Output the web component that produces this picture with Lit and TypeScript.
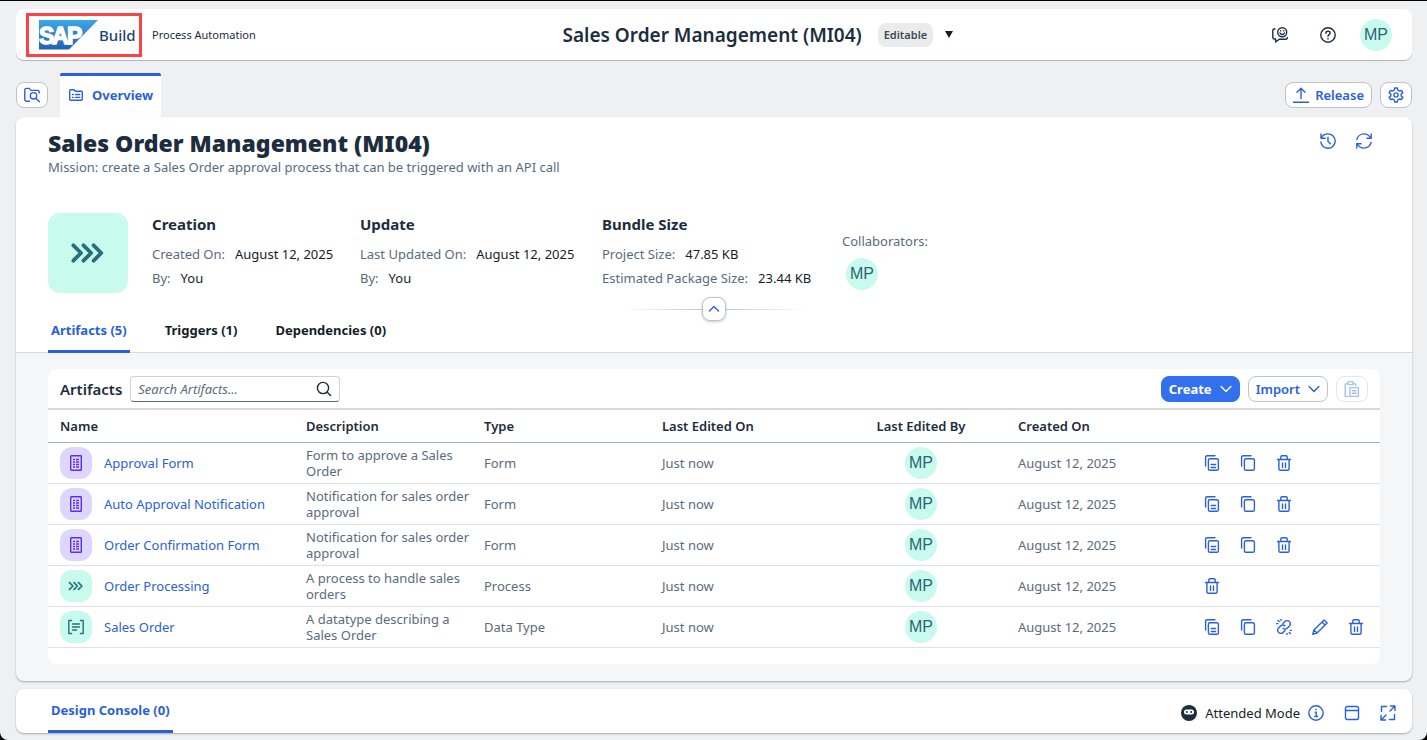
import { LitElement, html, css, svg, TemplateResult } from "lit";
import { customElement, property, state } from "lit/decorators.js";
import { classMap } from "lit/directives/class-map.js";

const glyphs: Record<string, TemplateResult> = {
  folderSearch: svg`<path d="M5.500 14.200H2.400C1.600 14.200 .8 13.600 .8 12.800V2.800C.8 2 1.600 1.400 2.400 1.400H5.200L7 3.400H13.600C14.400 3.400 15.200 4 15.200 4.800V6"/><circle cx="9.500" cy="8.800" r="3.200"/><path d="M11.900 11.200L15.400 14.800"/>`,
  listFolder: svg`<path d="M1.700 12.300V3.700C1.700 3.100 2.100 2.700 2.700 2.700H6L7.500 4.300H13.300C13.900 4.300 14.300 4.700 14.300 5.300V12.300C14.300 12.900 13.900 13.300 13.300 13.300H2.700C2.100 13.300 1.700 12.900 1.700 12.300Z"/><path d="M4.400 7.500H5.200M7.500 7.500H11.800M4.400 10.400H5.200M7.500 10.400H11.800"/>`,
  release: svg`<path d="M8 11.500V1.500M4 5.300L8 1.300L12 5.300M.2 15.200H15.800"/>`,
  gear: svg`<path d="M6.700 1H9.300L9.800 3.100L11.400 4L13.500 3.400L14.800 5.700L13.200 7.100V8.900L14.800 10.300L13.500 12.600L11.400 12L9.800 12.900L9.300 15H6.700L6.200 12.900L4.600 12L2.500 12.600L1.200 10.300L2.800 8.900V7.100L1.200 5.700L2.500 3.400L4.600 4L6.200 3.100Z"/><circle cx="8" cy="8" r="2.100"/>`,
  feedback: svg`<path d="M3 2H2.400C1.400 2 .8 2.700 .8 3.600V10.400C.8 11.400 1.400 12 2.400 12H3.600V15L7.300 12.200H13.500C14.600 12.200 15.400 11.600 15.400 10.600"/><circle cx="10.200" cy="5.200" r="4.500"/><path d="M8 6C8.500 7 9.200 7.500 10.200 7.500S11.900 7 12.400 6M8.700 3.700V3.900M11.700 3.700V3.900"/>`,
  help: svg`<circle cx="8" cy="8" r="7.200"/><path d="M5.900 6.300C5.900 5.100 6.800 4.300 8 4.300S10.100 5.100 10.100 6.200C10.100 7.500 8 7.700 8 9.200M8 11.500V12"/>`,
  history: svg`<path d="M1 1V5.200H5.200M1.300 5C2.500 2.500 5 .9 7.900 .9C11.900 .9 15.200 4.100 15.200 8.100S11.900 15.200 7.900 15.200C4.300 15.200 1.300 12.500 .8 9M8 4.300V8.500L10.500 10.800"/>`,
  refresh: svg`<path d="M15.200 1V5.200H11M14.800 5.200C13.500 2.700 11 .9 8 .9C4.500 .9 1.600 3.400 .9 6.500M.8 15V10.800H5M1.200 10.800C2.500 13.300 5 15.100 8 15.100C11.500 15.100 14.400 12.600 15.100 9.500"/>`,
  search: svg`<circle cx="7" cy="7" r="5.600"/><path d="M11 11L14.600 14.600"/>`,
  down: svg`<path d="M1.500 4.800L8 11.200L14.500 4.800" stroke-width="1.900"/>`,
  up: svg`<path d="M3.500 10L8 5.500L12.500 10"/>`,
  paste: svg`<path d="M3.600 2.600H2.700C1.800 2.600 1.200 3.200 1.200 4.100V13.900C1.200 14.800 1.800 15.400 2.700 15.400H4M9.500 2.600H10.400C11.300 2.600 11.900 3.200 11.900 4.100V4.500M4 1.600C4 1 4.400 .6 5 .6H8.100C8.700 .6 9.100 1 9.100 1.600V3.600H4Z"/><rect x="6" y="6.600" width="8.400" height="8.800"/><path d="M8.300 9.700H12.200M8.300 12.300H12.200"/>`,
  duplicate: svg`<path d="M1.600 11V2.300C1.600 1.300 2.300 .7 3.200 .7H11"/><rect x="4.400" y="3.700" width="10" height="11.600" rx="1.600"/><path d="M7.200 9.500H11.600M7.200 12.500H11.600"/>`,
  copy: svg`<path d="M1.600 11V2.300C1.600 1.300 2.300 .7 3.200 .7H11"/><rect x="4.400" y="3.700" width="10" height="11.600" rx="1.600"/>`,
  trash: svg`<path d="M1.500 4.500H14.500M4.800 4V2C4.800 1.200 5.300 .7 6 .7H10C10.700 .7 11.200 1.200 11.200 2V4M2.900 4.300V13.900C2.900 14.800 3.500 15.300 4.300 15.300H11.700C12.500 15.300 13.100 14.800 13.100 13.900V4.300M6.500 8V12.500M9.500 8V12.500"/>`,
  unlink: svg`<path d="M7 4.500L8.900 2.600C10.200 1.300 12.200 1.300 13.400 2.600S14.600 5.700 13.400 7L11.200 9.200C10 10.400 8.200 10.300 7.200 9.300M9 11.500L7.100 13.400C5.800 14.700 3.800 14.700 2.600 13.400S1.400 10.300 2.600 9L4.800 6.800C6 5.600 7.800 5.700 8.800 6.700M.6 4.600H1.800M2 1.400L3.100 2.500M5 .6V1.600M14.200 11.400H15.400M13.300 13.500L14.400 14.600M11 14.400V15.400"/>`,
  edit: svg`<path d="M.8 15.200L1.900 11L12.100 .9L15.100 3.900L5 14.100ZM10 3L13 6M2 11.100L4.900 14"/>`,
  info: svg`<circle cx="8" cy="8" r="7.200"/><path stroke-linecap="butt" d="M6.600 7.200H8.200V11.600M6.300 11.500H10M8 3.800V5.300"/>`,
  panel: svg`<rect x="1.500" y="1.500" width="13" height="13" rx="1.800"/><path d="M1.500 5.500H14.500"/>`,
  expand: svg`<path d="M10.500 1H15V5.500M15 1L10 6M5.500 15H1V10.500M1 15L6 10M6.500 1.500H1.500V6.500M9.500 14.500H14.500V9.500"/>`,
  form: svg`<rect x="2.700" y=".7" width="10.600" height="14.600" rx=".6"/><path stroke-linecap="butt" stroke-width="1.300" d="M5 4.500H7M8 4.500H11M5 7H7M8 7H11M5 9.500H7M8 9.500H11M5 12H7M8 12H11"/>`,
  process: svg`<path stroke-width="1.700" d="M1.500 4.600L4.900 8L1.500 11.400M6 4.600L9.400 8L6 11.400M10.500 4.600L13.900 8L10.500 11.400"/>`,
  datatype: svg`<path d="M3.600 1.500H.8V14.500H3.600M12.400 1.500H15.200V14.500H12.400M4.500 5H11.500M4.500 8H11.500M4.500 11H8.500"/>`,
};

@customElement("ui-icon")
export class UiIcon extends LitElement {
  @property() name = "";
  static styles = css`
    :host { display: inline-flex; width: 16px; height: 16px; flex: none; }
    svg { width: 100%; height: 100%; fill: none; stroke: currentColor; stroke-width: 1.4; stroke-linecap: round; stroke-linejoin: round; }
  `;
  render() {
    return html`<svg viewBox="0 0 16 16" aria-hidden="true">${glyphs[this.name]}</svg>`;
  }
}

interface Artifact {
  name: string;
  description: string;
  type: string;
  icon: string;
  actions: string[];
}

const full = ["duplicate", "copy", "trash"];
const artifacts: Artifact[] = [
  { name: "Approval Form", description: "Form to approve a Sales Order", type: "Form", icon: "form", actions: full },
  { name: "Auto Approval Notification", description: "Notification for sales order approval", type: "Form", icon: "form", actions: full },
  { name: "Order Confirmation Form", description: "Notification for sales order approval", type: "Form", icon: "form", actions: full },
  { name: "Order Processing", description: "A process to handle sales orders", type: "Process", icon: "process", actions: ["trash"] },
  { name: "Sales Order", description: "A datatype describing a Sales Order", type: "Data Type", icon: "datatype", actions: ["duplicate", "copy", "unlink", "edit", "trash"] },
];
const tabs = ["Artifacts (5)", "Triggers (1)", "Dependencies (0)"];

@customElement("app-root")
export class AppRoot extends LitElement {
  @state() private tab = 0;

  static styles = css`
    :host {
      display: block;
      background: #000;
      font-family: "Noto Sans", "Open Sans", sans-serif;
      font-size: 13px;
      line-height: 16px;
      color: #1d2d3e;
    }
    *, *::before { box-sizing: border-box; }
    h1, h2, h3, p, dl, dd, dt { margin: 0; }
    button, input { font: inherit; color: inherit; }
    button { margin: 0; padding: 0; border: 0; background: none; cursor: pointer; display: inline-flex; align-items: center; justify-content: center; }
    a { color: #2a61d8; text-decoration: none; }
    .page { min-height: 100vh; border-top: 1px solid #000; background: #eff0f2; border-radius: 0 0 8px 8px; padding: 8px 15px 7px 16px; display: flex; flex-direction: column; }
    .card { background: #fff; border-radius: 8px; box-shadow: 0 1px 2px #0000004d; }

    .shell { display: flex; align-items: center; justify-content: space-between; height: 51px; padding: 0 20px 0 10px; box-shadow: 0 1px 0 #b4b6b9; }
    .brand { display: flex; align-items: center; gap: 10px; }
    .mark { display: flex; align-items: center; gap: 1px; height: 44px; width: 116px; border: 3px solid #fb4245; padding-left: 10px; font-size: 15px; font-weight: 500; color: #1b4279; }
    .mark svg { width: 59px; height: 30px; flex: none; }
    .product { font-size: 11px; }
    .project { display: flex; align-items: center; gap: 8px; }
    .project h1 { font-size: 19px; font-weight: 600; line-height: 24px; padding-right: 8px; }
    .badge { background: #eaebed; border-radius: 8px; padding: 4px 6px; font-size: 11px; font-weight: 600; color: #434a52; }
    .caret { width: 16px; height: 24px; }
    .caret::before { content: ""; border: 4px solid transparent; border-top: 7px solid #131e29; border-bottom: 0; }
    .tools { display: flex; align-items: center; gap: 16px; }
    .tools button { width: 32px; height: 32px; }
    .avatar { display: inline-flex; align-items: center; justify-content: center; width: 32px; height: 32px; border-radius: 50%; background: #c8faee; color: #2d6674; font: 16px/32px "Liberation Sans", sans-serif; }

    .bar { display: flex; align-items: center; gap: 8px; height: 44px; margin-top: 13px; }
    .bar .open { display: flex; align-items: center; align-self: stretch; gap: 8px; margin: 0 auto 0 4px; padding: 0 8px 3px; background: #fff; border-top: 3px solid #2a61d8; border-radius: 2px 2px 0 0; font-weight: 700; color: #2a61d8; }
    .btn { height: 26px; padding: 0 7px; gap: 6px; border: 1px solid #bcc3ca; border-radius: 8px; background: #fff; color: #2a61d8; font-weight: 600; }
    .btn.emph { background: #3370ee; border-color: #3370ee; color: #fff; font-weight: 700; }
    .btn.menu { gap: 8px; }
    .menu ui-icon { width: 12px; height: 12px; }
    .btn:disabled { opacity: .4; }

    .panel { display: flex; flex-direction: column; background: #f5f6f7; flex: 1; }
    .head { background: #fff; border-bottom: 1px solid #d9d9d9; border-radius: 8px 8px 0 0; padding: 12px 32px 0; }
    .title { display: flex; justify-content: space-between; }
    .title h2 { font-size: 23px; line-height: 28px; font-weight: 900; }
    .muted, .title p { color: #5b6b7d; }
    .title p { line-height: 20px; }
    .title .tools { gap: 4px; height: 24px; color: #2a61d8; }
    .info { display: grid; grid-template-columns: 80px 184px 218px 216px auto; align-items: start; gap: 24px; margin-top: 36px; }
    .tile { width: 80px; height: 80px; border-radius: 12px; background: #c8faee; color: #266f7b; display: flex; align-items: center; justify-content: center; }
    .tile ui-icon { width: 36px; height: 36px; }
    .facts h3 { font-size: 15px; line-height: 22px; margin-bottom: 7px; font-weight: 700; }
    .facts dl > div { display: flex; gap: 10px; line-height: 24px; white-space: nowrap; }
    .facts dt { color: #5b6b7d; }
    .facts dd { color: #131e29; }
    .people { padding-top: 20px; }
    .people .avatar { margin: 9px 0 0 4px; display: flex; }
    .fold { display: flex; align-items: center; justify-content: center; margin-top: 4px; }
    .fold::before, .fold::after { content: ""; width: 80px; height: 1px; background: linear-gradient(90deg, #fff, #c4c6c8); }
    .fold::after { background: linear-gradient(270deg, #fff, #c4c6c8); }
    .fold button { width: 24px; height: 24px; border: 1px solid #bcc3ca; border-radius: 8px; box-shadow: 0 1px 3px #00000033; color: #2a61d8; background: #fff; }
    .tabs { display: flex; gap: 32px; margin-bottom: -1px; }
    .tab { padding: 0 3px 11px; border-bottom: 3px solid transparent; line-height: 18px; font-weight: 700; color: #131e29; border-radius: 2px 2px 0 0; }
    .tab.on { color: #2a61d8; border-color: #2a61d8; }

    .list { margin: 16px 32px; padding-bottom: 16px; background: #fff; border-radius: 8px; }
    .toolbar { display: flex; align-items: center; gap: 8px; height: 39px; padding: 0 12px; }
    .toolbar h3 { font-size: 15px; line-height: 20px; font-weight: 600; }
    .search { display: flex; align-items: center; width: 210px; height: 26px; margin-right: auto; padding: 0 7px; border: 1px solid #d0d4d8; border-bottom-color: #556b81; border-radius: 4px; }
    .search input { flex: 1; min-width: 0; border: 0; outline: 0; padding: 0; background: none; }
    .search input::placeholder { font-style: italic; color: #5b6b7d; opacity: 1; }
    table { width: 100%; table-layout: fixed; border-collapse: separate; border-spacing: 0; border-top: 2px solid #d9d9d9; }
    th { height: 33px; padding: 0 0 0 8px; text-align: left; font-weight: 600; border-bottom: 1px solid #a8b2bd; }
    td { height: 41px; padding: 0 0 0 8px; color: #5b6b7d; border-bottom: 1px solid #e0e1e3; }
    th:first-child, td:first-child { width: 250px; padding-left: 12px; }
    th.who, td.who { padding: 0; text-align: center; }
    th.acts { width: 192px; }
    .who .avatar { vertical-align: middle; }
    .item { display: flex; align-items: center; gap: 12px; }
    .kind { display: flex; align-items: center; justify-content: center; width: 32px; height: 32px; border-radius: 12px; background: #c8faee; color: #266f7b; }
    .kind.form { background: #dfd6ff; color: #5a2ff0; }
    .row-acts { display: flex; gap: 4px; color: #2a61d8; }
    .row-acts button { width: 32px; height: 32px; }

    .console { display: flex; align-items: flex-start; justify-content: space-between; height: 44px; margin-top: 8px; padding: 0 16px 0 32px; }
    .console .tab { padding: 12px 3px 11px; }
    .status { display: flex; align-items: center; gap: 8px; height: 48px; color: #131e29; }
    .status .btns { display: flex; gap: 20px; color: #2a61d8; }
    .bot { width: 16px; height: 16px; }
  `;

  private person() {
    return html`<span class="avatar">MP</span>`;
  }

  private iconButton(name: string) {
    return html`<button type="button" aria-label=${name}><ui-icon name=${name}></ui-icon></button>`;
  }

  private fact(title: string, rows: [string, string][]) {
    return html`<section class="facts"><h3>${title}</h3>
      <dl>${rows.map(([k, v]) => html`<div><dt>${k}</dt><dd>${v}</dd></div>`)}</dl></section>`;
  }

  render() {
    return html`<div class="page">
      <header class="shell card">
        <div class="brand">
          <div class="mark">
            <svg viewBox="0 0 59 30" role="img" aria-label="SAP">
              <defs><linearGradient id="g" x2="0" y2="1"><stop stop-color="#3ba7ea" /><stop offset="1" stop-color="#2360b4" /></linearGradient></defs>
              <path d="M0 0H59L30 29.500H0Z" fill="url(#g)" />
              <text y="23.500" font-family="Liberation Sans, sans-serif" font-size="23" font-weight="700" fill="#fff" stroke="#fff" stroke-width="1.400"><tspan x="0">S</tspan><tspan x="13">A</tspan><tspan x="28">P</tspan></text>
            </svg>
            <span>Build</span>
          </div>
          <span class="product">Process Automation</span>
        </div>
        <div class="project">
          <h1>Sales Order Management (MI04)</h1>
          <span class="badge">Editable</span>
          <button class="caret" type="button" aria-label="Versions"></button>
        </div>
        <div class="tools">
          ${this.iconButton("feedback")} ${this.iconButton("help")}
          <span class="avatar">MP</span>
        </div>
      </header>

      <nav class="bar">
        <button class="btn" type="button" aria-label="Browse project"><ui-icon name="folderSearch"></ui-icon></button>
        <a class="open" href="#overview"><ui-icon name="listFolder"></ui-icon>Overview</a>
        <button class="btn" type="button"><ui-icon name="release"></ui-icon>Release</button>
        <button class="btn" type="button" aria-label="Settings"><ui-icon name="gear"></ui-icon></button>
      </nav>

      <main class="panel card">
        <div class="head">
          <div class="title">
            <div>
              <h2>Sales Order Management (MI04)</h2>
              <p>Mission: create a Sales Order approval process that can be triggered with an API call</p>
            </div>
            <div class="tools">${this.iconButton("history")} ${this.iconButton("refresh")}</div>
          </div>
          <div class="info">
            <div class="tile"><ui-icon name="process"></ui-icon></div>
            ${this.fact("Creation", [["Created On:", "August 12, 2025"], ["By:", "You"]])}
            ${this.fact("Update", [["Last Updated On:", "August 12, 2025"], ["By:", "You"]])}
            ${this.fact("Bundle Size", [["Project Size:", "47.85 KB"], ["Estimated Package Size:", "23.44 KB"]])}
            <div class="people muted">Collaborators:${this.person()}</div>
          </div>
          <div class="fold"><button type="button" aria-label="Collapse header"><ui-icon name="up"></ui-icon></button></div>
          <div class="tabs" role="tablist">
            ${tabs.map((t, i) => html`<button type="button" role="tab" aria-selected=${i === this.tab}
              class=${classMap({ tab: true, on: i === this.tab })} @click=${() => (this.tab = i)}>${t}</button>`)}
          </div>
        </div>

        <section class="list">
          <div class="toolbar">
            <h3>Artifacts</h3>
            <label class="search"><input type="text" aria-label="Search artifacts" placeholder="Search Artifacts..." /><ui-icon name="search"></ui-icon></label>
            <button class="btn menu emph" type="button">Create<ui-icon name="down"></ui-icon></button>
            <button class="btn menu" type="button">Import<ui-icon name="down"></ui-icon></button>
            <button class="btn" type="button" aria-label="Paste" disabled><ui-icon name="paste"></ui-icon></button>
          </div>
          <table>
            <thead><tr><th>Name</th><th>Description</th><th>Type</th><th>Last Edited On</th><th class="who">Last Edited By</th><th>Created On</th><th class="acts"></th></tr></thead>
            <tbody>
              ${artifacts.map((a) => html`<tr>
                <td><div class="item"><span class=${classMap({ kind: true, form: a.icon === "form" })}><ui-icon name=${a.icon}></ui-icon></span><a href="#artifact">${a.name}</a></div></td>
                <td>${a.description}</td>
                <td>${a.type}</td>
                <td>Just now</td>
                <td class="who">${this.person()}</td>
                <td>August 12, 2025</td>
                <td><div class="row-acts">${a.actions.map((n) => this.iconButton(n))}</div></td>
              </tr>`)}
            </tbody>
          </table>
        </section>
      </main>

      <footer class="console card">
        <button type="button" class="tab on">Design Console (0)</button>
        <div class="status">
          <svg class="bot" viewBox="0 0 16 16" aria-hidden="true">
            <circle cx="8" cy="8" r="8" fill="#1d2d3e" />
            <rect x="3" y="4.500" width="10" height="5" rx="2.500" fill="#fff" />
            <circle cx="5.800" cy="7" r="1" fill="#1d2d3e" /><circle cx="10.200" cy="7" r="1" fill="#1d2d3e" />
          </svg>
          <span>Attended Mode</span>
          <div class="btns">${this.iconButton("info")} ${this.iconButton("panel")} ${this.iconButton("expand")}</div>
        </div>
      </footer>
    </div>`;
  }
}
